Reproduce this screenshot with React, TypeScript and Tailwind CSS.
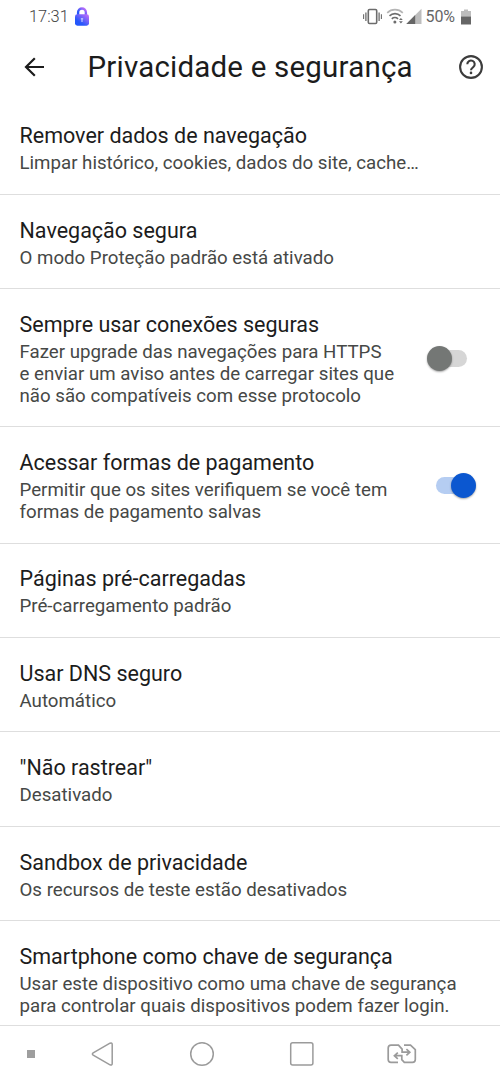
import clsx from 'clsx';

interface Setting {
  title: string;
  lines: string[];
  enabled?: boolean;
}

const settings: Setting[] = [
  { title: 'Remover dados de navegação', lines: ['Limpar histórico, cookies, dados do site, cache…'] },
  { title: 'Navegação segura', lines: ['O modo Proteção padrão está ativado'] },
  {
    title: 'Sempre usar conexões seguras',
    lines: [
      'Fazer upgrade das navegações para HTTPS',
      'e enviar um aviso antes de carregar sites que',
      'não são compatíveis com esse protocolo',
    ],
    enabled: false,
  },
  {
    title: 'Acessar formas de pagamento',
    lines: ['Permitir que os sites verifiquem se você tem', 'formas de pagamento salvas'],
    enabled: true,
  },
  { title: 'Páginas pré-carregadas', lines: ['Pré-carregamento padrão'] },
  { title: 'Usar DNS seguro', lines: ['Automático'] },
  { title: '"Não rastrear"', lines: ['Desativado'] },
  { title: 'Sandbox de privacidade', lines: ['Os recursos de teste estão desativados'] },
  {
    title: 'Smartphone como chave de segurança',
    lines: ['Usar este dispositivo como uma chave de segurança', 'para controlar quais dispositivos podem fazer login.'],
  },
];

function StatusBar() {
  return (
    <div className="flex h-[34px] shrink-0 items-center pl-[29px] pr-[28.5px] pt-px text-[#666]">
      <span className="text-[16.4px] leading-none font-light text-[#444]">17:31</span>
      <svg className="-mt-[2px] ml-[5.5px]" width="16" height="20" viewBox="0 0 16 20">
        <defs>
          <linearGradient id="lock" x1="0.1" y1="1" x2="0.9" y2="0.1">
            <stop offset="0.3" stopColor="#2457fb" />
            <stop offset="1" stopColor="#b66cfa" />
          </linearGradient>
        </defs>
        <path d="M4.1 9V5.4a3.9 3.9 0 0 1 7.8 0V9" fill="none" stroke="url(#lock)" strokeWidth="2.4" />
        <rect x="1" y="7.2" width="14" height="11.5" rx="2.4" fill="url(#lock)" />
        <path d="M8 11v4M6.8 11.8h2.4" stroke="#b9c4ff" strokeWidth="1.2" />
      </svg>
      <div className="-mt-px ml-auto flex items-center">
        {/* vibrate */}
        <svg width="20" height="18" viewBox="0 0 20 18" fill="none" stroke="#6c6c6c">
          <rect x="5.3" y="1.5" width="8.4" height="14" rx="1.2" strokeWidth="1.6" />
          <path d="M2.9 4.5v8.4M16.1 4.5v8.4" strokeWidth="1.3" />
          <path d="M.6 6.3v4.8M18.4 6.3v4.8" strokeWidth="1.1" />
        </svg>
        {/* wifi */}
        <svg className="ml-[3px]" width="19" height="18" viewBox="0 0 19 18" fill="none" stroke="#6c6c6c" strokeWidth="1.6">
          <path d="M1.2 4.9a11 11 0 0 1 15.6 0" stroke="#b5b5b5" />
          <path d="M3.5 7.9a7.8 7.8 0 0 1 11 0" />
          <path d="M5.8 10.9a4.5 4.5 0 0 1 6.2 0" />
          <circle cx="8.9" cy="14" r="1.5" fill="#6c6c6c" stroke="none" />
          <path d="M13 12l1.9-2.1 1.9 2.1zM13 13.3l1.9 2.1 1.9-2.1z" fill="#6c6c6c" stroke="none" />
        </svg>
        {/* signal */}
        <svg className="ml-px" width="16" height="18" viewBox="0 0 16 18">
          <path d="M15.5 .8V16H.3z" fill="#bdbdbd" />
          <path d="M9.2 7.1V16H.3z" fill="#666" />
        </svg>
        <span className="ml-[4px] w-[31px] whitespace-nowrap text-[16px] leading-none tracking-[-0.1px]">50%</span>
        <svg className="-mt-px ml-[4px] mr-px" width="10" height="16" viewBox="0 0 10 16">
          <path d="M0 2h3V.5h4V2h3v6H0z" fill="#bdbdbd" />
          <path d="M0 7.6h10V15.5H0z" fill="#666" />
        </svg>
      </div>
    </div>
  );
}

function Header() {
  return (
    <header className="flex h-[66px] shrink-0 items-center pl-[24px] pr-[17px]">
      <svg width="21" height="20" viewBox="0 0 21 20" fill="none" stroke="#1c1c1c" strokeWidth="2.2">
        <path d="M20 10H2.4M10.8 1.2L2 10l8.8 8.8" />
      </svg>
      <h1 className="ml-[42.5px] pt-[2px] whitespace-nowrap text-[29.5px] leading-none tracking-[0.2px] text-[#1c1c1c]">
        Privacidade e segurança
      </h1>
      <svg className="ml-auto" width="24" height="24" viewBox="0 0 24 24" fill="none" stroke="#3c3c3c" strokeWidth="2.1">
        <circle cx="12" cy="12" r="10.9" />
        <path d="M8.3 9.3a3.7 3.7 0 1 1 5.9 2.9c-1.3 1-2.2 1.5-2.2 3.1" />
        <circle cx="12" cy="17.9" r="1.3" fill="#3c3c3c" stroke="none" />
      </svg>
    </header>
  );
}

function Toggle({ on }: { on: boolean }) {
  return (
    <span
      className={clsx(
        '-mt-[2px] flex h-[17px] w-[36px] items-center rounded-full',
        on ? 'mr-[28px] justify-end bg-[#b5cdf2]' : 'mr-[33px] bg-[#d6d6d6]'
      )}
    >
      <span
        className={clsx(
          'size-[25px] shrink-0 rounded-full shadow-[0_1px_2px_rgba(0,0,0,0.35)]',
          on ? '-mr-[4px] bg-[#0b57d0]' : '-ml-[4px] bg-[#747775]'
        )}
      />
    </span>
  );
}

function SettingRow({ title, lines, enabled }: Setting) {
  return (
    <div className="flex shrink-0 items-center justify-between border-b border-[#dedede] pt-[21.8px] pb-[18.8px] pl-[19.5px]">
      <div className="whitespace-nowrap">
        <div className="text-[21.5px] leading-[28px] text-[#1c1c1c]">{title}</div>
        <div className="mt-[3px] text-[18.7px] leading-[21.8px] text-[#464846]">
          {lines.map((line) => (
            <div key={line}>{line}</div>
          ))}
        </div>
      </div>
      {enabled !== undefined && <Toggle on={enabled} />}
    </div>
  );
}

function NavBar() {
  return (
    <nav className="flex h-[58px] shrink-0 items-center border-t border-[#dedede] bg-white pb-[2px] pl-[27px] text-[#9b9b9b]">
      <span className="size-[8px] bg-[#9e9e9e]" />
      <svg className="ml-[56px]" width="24" height="26" viewBox="0 0 24 26" fill="none" stroke="currentColor" strokeWidth="1.5">
        <path d="M19 2.2L2.2 11.8q-1.6 1.2 0 2.4L19 23.8q2.2.9 2.2-1.3v-19q0-2.2-2.2-1.3z" />
      </svg>
      <svg className="ml-[74px]" width="26" height="26" viewBox="0 0 26 26" fill="none" stroke="currentColor" strokeWidth="1.5">
        <circle cx="13" cy="13" r="11.3" />
      </svg>
      <svg className="ml-[74px]" width="26" height="26" viewBox="0 0 26 26" fill="none" stroke="currentColor" strokeWidth="1.5">
        <rect x="1.7" y="1.7" width="22.2" height="22.2" rx="2" />
      </svg>
      <svg className="ml-[71px]" width="32" height="22" viewBox="0 0 32 22" fill="none" stroke="currentColor" strokeWidth="1.7">
        <path d="M12 19.3H5Q2.2 19.3 2.2 16.5V5Q2.2 2.2 5 2.2h7.5l3.6 4v3h7.4M20.4 6.1l3.4 3.1-3.4 3.1" />
        <path d="M18 2.2h6.5l4.8 4.4v9.9q0 2.8-2.8 2.8h-8.2l-2.5-2.6v-4H8.5M11.8 9.7l-3.4 3.1 3.4 3.1" />
      </svg>
    </nav>
  );
}

export default function App() {
  return (
    <div className="flex h-[1083px] w-[500px] flex-col overflow-hidden bg-white font-[Roboto,sans-serif]">
      <StatusBar />
      <Header />
      <main className="flex min-h-0 flex-1 flex-col overflow-hidden pt-[0.6px]">
        {settings.map((setting) => (
          <SettingRow key={setting.title} {...setting} />
        ))}
      </main>
      <NavBar />
    </div>
  );
}
